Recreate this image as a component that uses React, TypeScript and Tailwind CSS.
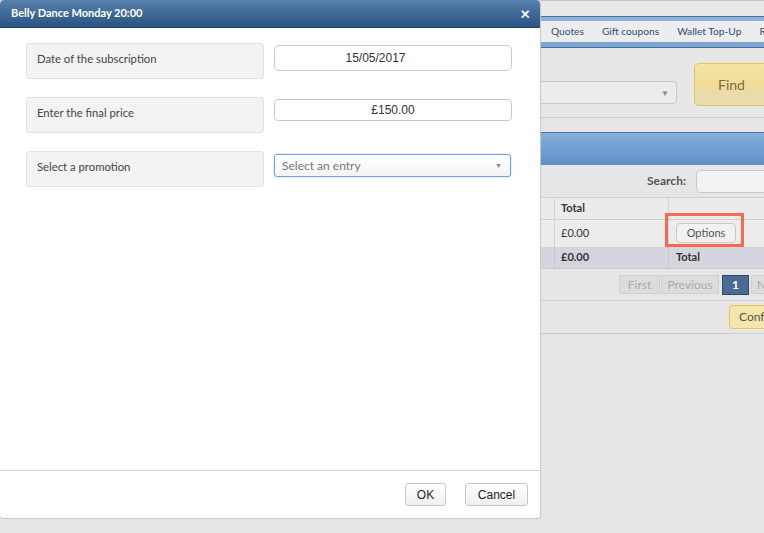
import React from "react";

const font = { fontFamily: "Lato, 'Noto Sans', sans-serif" };

function Background() {
  return (
    <div className="w-[764px] h-[533px] overflow-hidden bg-[#e4e4e4] flex flex-col text-[#333]" style={font}>
      <div className="h-[16px] shrink-0 bg-[#e9e9e9] border-t border-[#c4c4c4]" />
      <div className="h-[5px] shrink-0 border-t border-[#4b709a] bg-[#8cb0d9]" />
      <div className="h-[21px] shrink-0 bg-[#ededed] flex items-center gap-[18px] pl-[551px] text-[10.2px] text-[#2c4c74] whitespace-nowrap">
        <span className="shrink-0">Quotes</span>
        <span className="shrink-0">Gift coupons</span>
        <span className="shrink-0">Wallet Top-Up</span>
        <span className="shrink-0">Reports</span>
      </div>
      <div className="h-[6px] shrink-0 bg-[#7da6d2] border-b border-[#4a6f98]" />
      <div className="h-[70px] shrink-0 bg-[#e7e7e7] border-b border-[#cdcdcd] flex items-start">
        <div className="ml-[480px] mt-[33px] w-[197px] h-[23px] shrink-0 rounded-[4px] border border-[#c8c8c8] bg-[#ececec] flex items-center justify-end pr-[7px]">
          <span className="text-[8px] text-[#888]">▼</span>
        </div>
        <div className="ml-[17px] mt-[15px] w-[80px] h-[43px] rounded-[5px] border border-[#e6c64c] bg-[linear-gradient(#f4e3a5_0%,#f0dc98_60%,#ebdca8_60%,#e9dcae_100%)] flex items-center pl-[23px] text-[14px] text-[#7a6a48] shrink-0">
          Find
        </div>
      </div>
      <div className="h-[14px] shrink-0 bg-[#e5e5e5]" />
      <div className="h-[33px] shrink-0 border-t border-[#4d78a5] bg-[linear-gradient(#86afdb,#5d8fc6)]" />
      <div className="h-[32px] shrink-0 bg-[#e6e6e6] flex items-center">
        <span className="ml-[647px] shrink-0 text-[12px] font-bold text-[#555]">Search:</span>
        <div className="ml-[10px] w-[80px] h-[23px] shrink-0 rounded-[4px] border border-[#cacaca] bg-[#f2f2f2]" />
      </div>
      <div className="h-[23px] shrink-0 bg-[#ebebeb] border-t border-[#cfcfcf] border-b flex">
        <div className="w-[555px] shrink-0 border-r border-[#d4d4d4]" />
        <div className="w-[114px] shrink-0 border-r border-[#d4d4d4] pl-[6px] flex items-center text-[11px] font-bold">Total</div>
        <div className="flex-1" />
      </div>
      <div className="h-[27px] shrink-0 bg-[#ececec] flex">
        <div className="w-[555px] shrink-0 border-r border-dotted border-[#c0c0c0]" />
        <div className="w-[114px] shrink-0 border-r border-dotted border-[#c0c0c0] pl-[6px] flex items-center text-[11px]">£0.00</div>
        <div className="flex-1 relative">
          <div className="absolute left-[7px] top-[3px] w-[60px] h-[20px] rounded-[4px] border border-[#c9c9c9] bg-[#f1f1f1] flex items-center justify-center text-[11px] text-[#555]">
            Options
          </div>
          <div className="absolute left-[-4px] top-[-7px] w-[79px] h-[34px] border-[3px] border-[#f36b52]" />
        </div>
      </div>
      <div className="h-[22px] shrink-0 bg-[#d5d5e0] flex border-b border-[#cacaca]">
        <div className="w-[555px] shrink-0 border-r border-dotted border-[#b8b8c4]" />
        <div className="w-[114px] shrink-0 border-r border-dotted border-[#b8b8c4] pl-[6px] flex items-center text-[11px] font-bold">£0.00</div>
        <div className="flex-1 pl-[7px] flex items-center text-[11px] font-bold">Total</div>
      </div>
      <div className="h-[32px] shrink-0 bg-[#e6e6e6] border-b border-[#cbcbcb] flex items-center pl-[619px] gap-[1px] text-[12px]">
        <div className="w-[41px] h-[19px] shrink-0 bg-[#dcdcdc] border border-[#d0d0d0] text-[#aaa] flex items-center justify-center">First</div>
        <div className="w-[58px] h-[19px] shrink-0 bg-[#dcdcdc] border border-[#d0d0d0] text-[#aaa] flex items-center justify-center">Previous</div>
        <div className="ml-[2px] w-[27px] h-[20px] shrink-0 bg-[#4b6c92] border border-[#2d4a6c] text-white font-bold flex items-center justify-center">1</div>
        <div className="ml-[1px] w-[40px] h-[19px] shrink-0 bg-[#dcdcdc] border border-[#d0d0d0] text-[#aaa] flex items-center pl-[5px]">Next</div>
      </div>
      <div className="h-[33px] shrink-0 bg-[#e6e6e6] border-b border-[#cbcbcb] flex items-center pl-[729px]">
        <div className="w-[70px] h-[24px] shrink-0 rounded-[4px] border border-[#e4c45c] bg-[#f4e5ab] flex items-center pl-[9px] text-[12px] text-[#555]">Confirm</div>
      </div>
      <div className="flex-1 bg-[#e6e6e6]" />
    </div>
  );
}

function Row({ label, children }: { label: string; children: React.ReactNode }) {
  return (
    <div className="flex items-start">
      <div className="w-[238px] h-[36px] shrink-0 rounded-[3px] border border-[#e2e2e2] bg-[#f3f3f3] flex items-center pl-[10px] pb-[3px] text-[11.3px] text-[#444]">
        {label}
      </div>
      <div className="ml-[10px] pt-[2px]">{children}</div>
    </div>
  );
}

function Dialog() {
  return (
    <div className="absolute left-0 top-0 w-[541px] h-[519px] bg-white rounded-[4px] border-r border-b border-[#c7c7c7] flex flex-col overflow-hidden" style={font}>
      <div className="h-[28px] shrink-0 rounded-t-[4px] bg-[linear-gradient(#5981ad,#2a5282)] border-b border-[#22456e] flex items-center justify-between pl-[11px] pr-[10px]">
        <span className="text-white font-bold text-[11px]">Belly Dance Monday 20:00</span>
        <span className="text-white font-bold text-[17px] leading-none">×</span>
      </div>
      <div className="flex-1 flex flex-col gap-[18px] pl-[26px] pt-[15px]">
        <Row label="Date of the subscription">
          <div className="w-[238px] h-[26px] rounded-[5px] border border-[#c9c9c9] flex items-center justify-center pr-[35px] text-[12px] text-[#333]" style={{ fontFamily: "'Liberation Sans', Arial, sans-serif" }}>
            15/05/2017
          </div>
        </Row>
        <Row label="Enter the final price">
          <div className="w-[238px] h-[22px] rounded-[4px] border border-[#c9c9c9] flex items-center justify-center text-[12px] text-[#333]" style={{ fontFamily: "'Liberation Sans', Arial, sans-serif" }}>
            £150.00
          </div>
        </Row>
        <Row label="Select a promotion">
          <div className="w-[237px] h-[23px] mt-[1px] rounded-[3px] border border-[#6fa2e2] bg-[linear-gradient(#ffffff,#f4f4f4)] flex items-center justify-between pl-[7px] pr-[8px] text-[12px] text-[#777] shadow-[0_0_2px_rgba(90,150,230,0.5)]">
            <span>Select an entry</span>
            <span className="text-[7px] text-[#888]">▼</span>
          </div>
        </Row>
      </div>
      <div className="h-[48px] shrink-0 border-t border-[#cfcfcf] flex items-center justify-end gap-[19px] pr-[12px]" style={{ fontFamily: "'Liberation Sans', Arial, sans-serif" }}>
        <div className="w-[41px] h-[23px] rounded-[3px] border border-[#c6c6c6] bg-[linear-gradient(#ffffff,#f0f0f0)] flex items-center justify-center text-[12px] text-[#222]">OK</div>
        <div className="w-[63px] h-[23px] rounded-[3px] border border-[#c6c6c6] bg-[linear-gradient(#ffffff,#f0f0f0)] flex items-center justify-center text-[12px] text-[#222]">Cancel</div>
      </div>
    </div>
  );
}

export default function App() {
  return (
    <div className="relative w-[764px] h-[533px] overflow-hidden">
      <Background />
      <Dialog />
    </div>
  );
}
